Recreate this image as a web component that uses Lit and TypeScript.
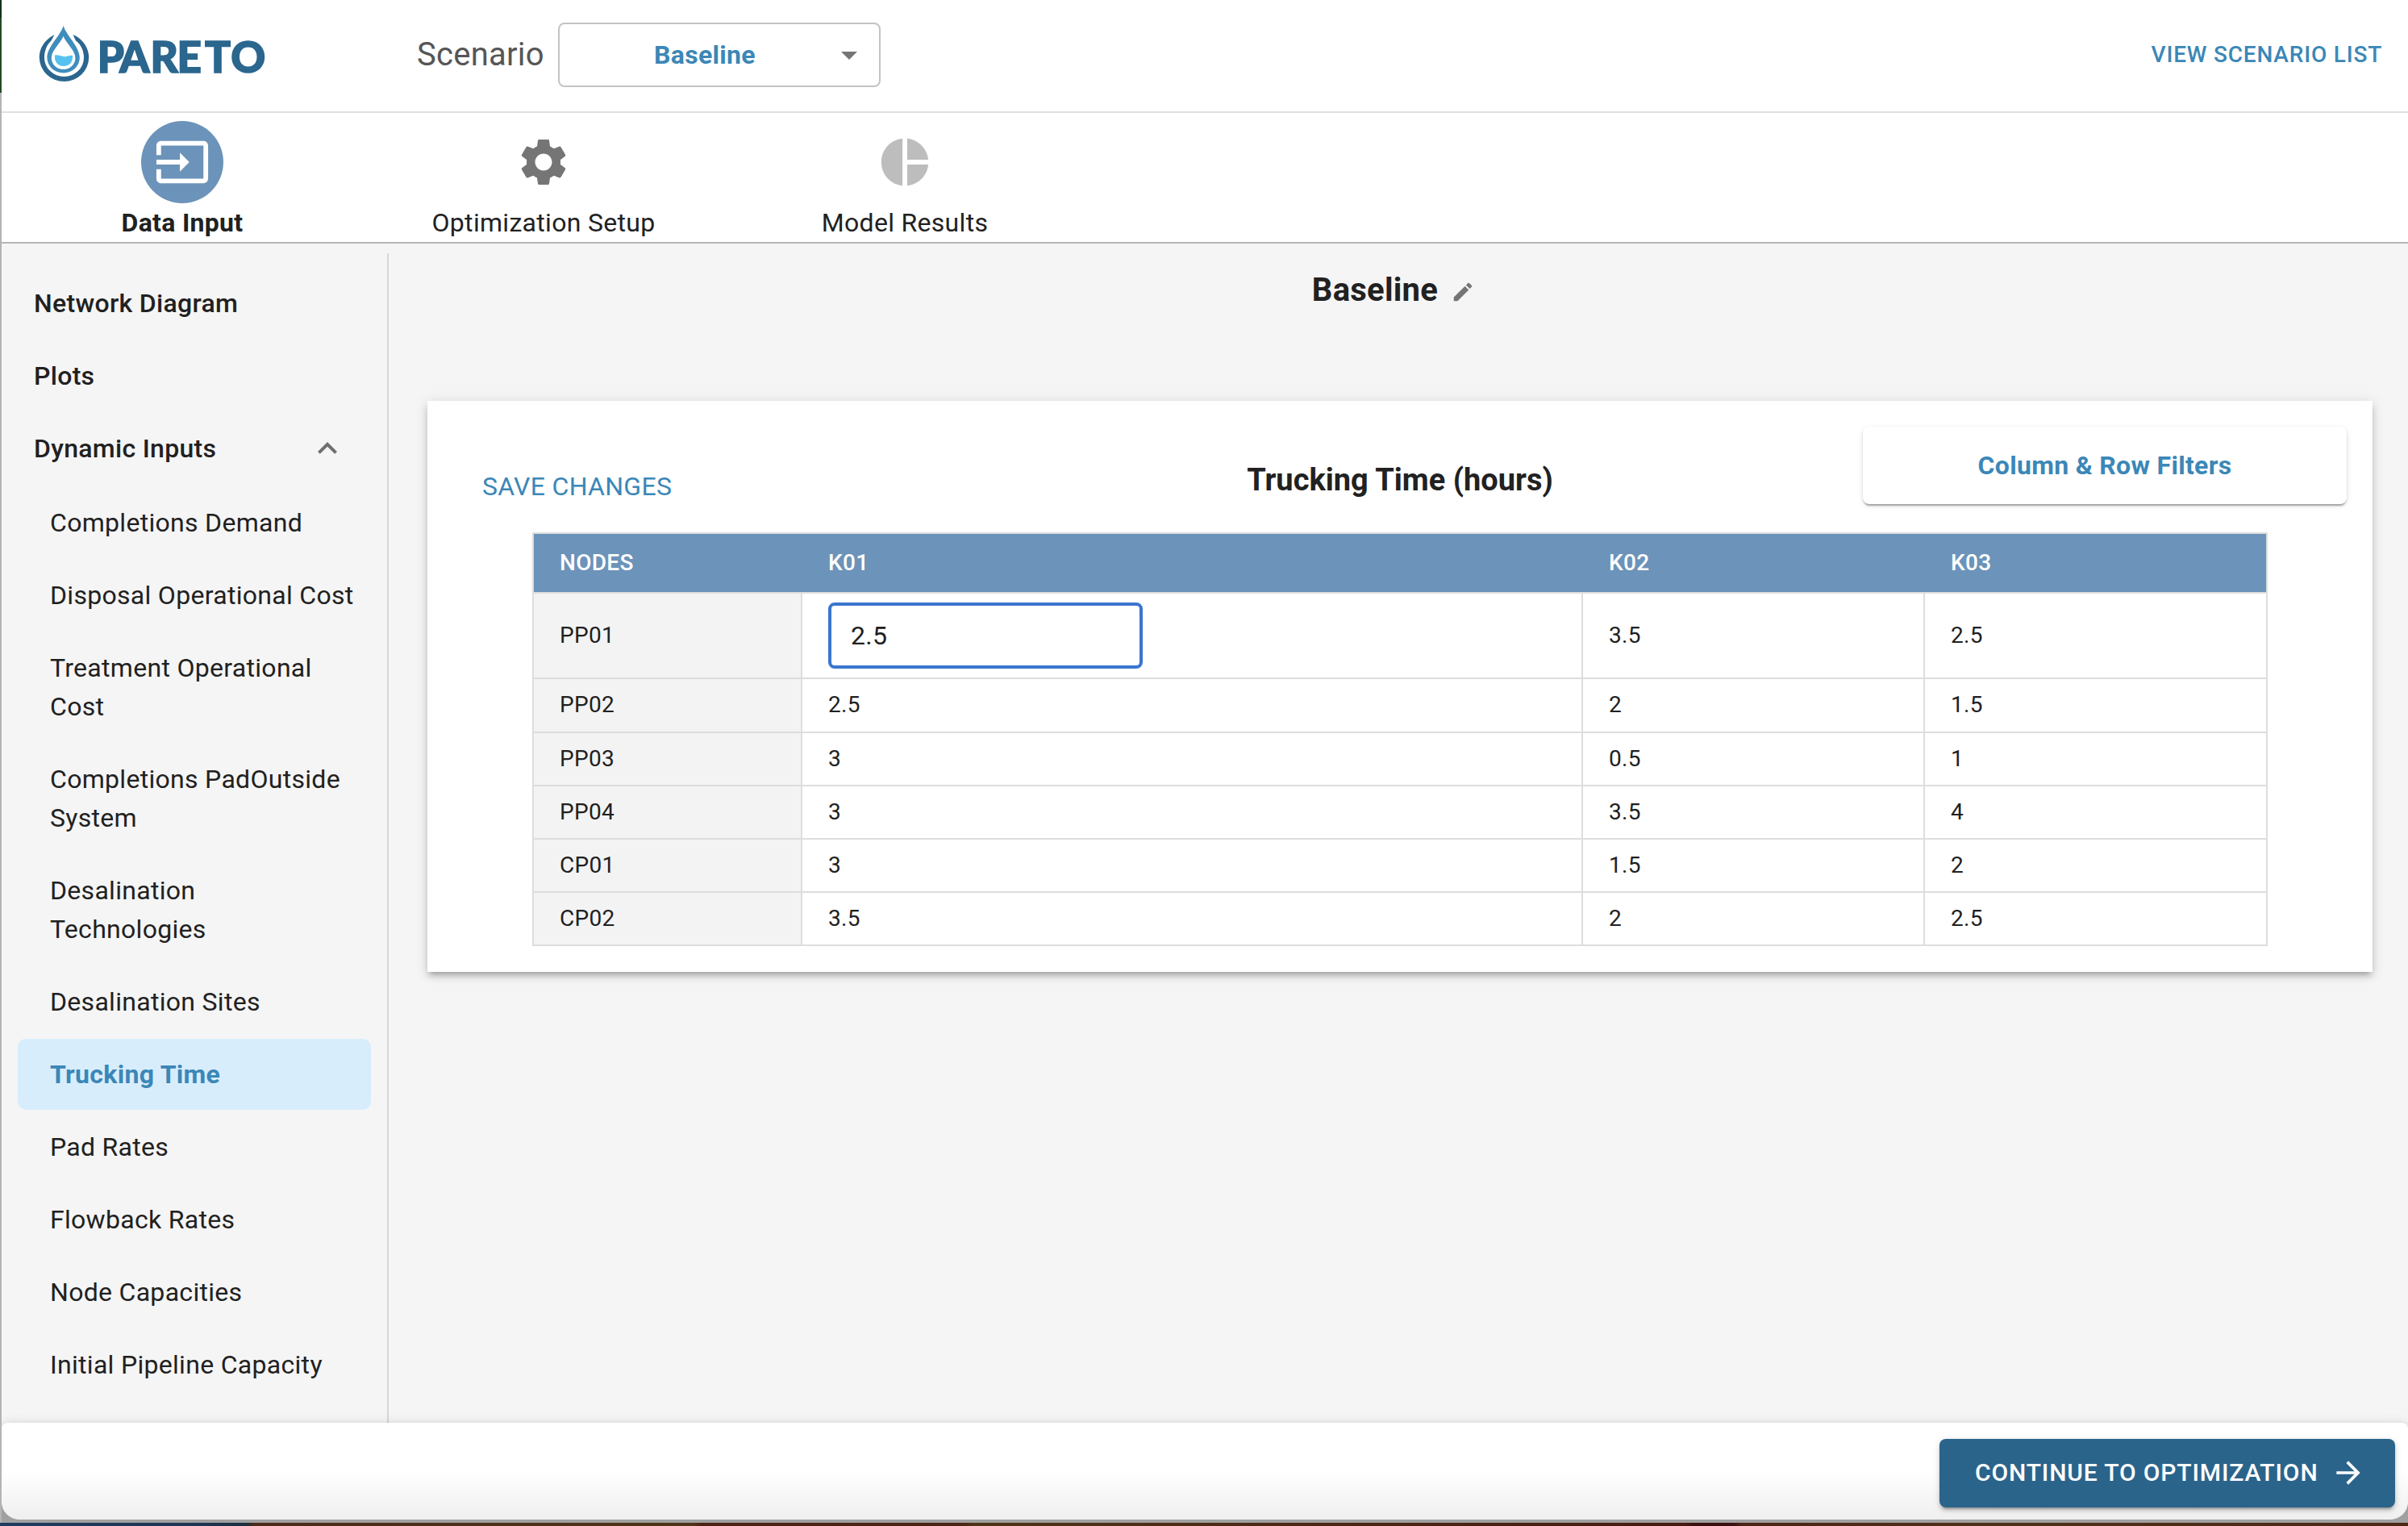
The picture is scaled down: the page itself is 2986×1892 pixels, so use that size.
import { LitElement, html, css, svg } from "lit";
import { customElement, state } from "lit/decorators.js";
import { classMap } from "lit/directives/class-map.js";

const ICONS = {
  input:
    "M21 3.01H3c-1.1 0-2 .9-2 2V9h2V4.99h18v14.03H3V15H1v4.01c0 1.1.9 1.98 2 1.98h18c1.1 0 2-.88 2-1.98v-14c0-1.11-.9-2-2-2zM11 16l4-4-4-4v3H1v2h10v3z",
  settings:
    "M19.14 12.94c.04-.3.06-.61.06-.94 0-.32-.02-.64-.07-.94l2.03-1.58c.18-.14.23-.41.12-.61l-1.92-3.32c-.12-.22-.37-.29-.59-.22l-2.39.96c-.5-.38-1.03-.7-1.62-.94l-.36-2.54c-.04-.24-.24-.41-.48-.41h-3.84c-.24 0-.43.17-.47.41l-.36 2.54c-.59.24-1.13.57-1.62.94l-2.39-.96c-.22-.08-.47 0-.59.22L2.74 8.87c-.12.21-.08.47.12.61l2.03 1.58c-.05.3-.09.63-.09.94s.02.64.07.94l-2.03 1.58c-.18.14-.23.41-.12.61l1.92 3.32c.12.22.37.29.59.22l2.39-.96c.5.38 1.03.7 1.62.94l.36 2.54c.05.24.24.41.48.41h3.84c.24 0 .44-.17.47-.41l.36-2.54c.59-.24 1.13-.56 1.62-.94l2.39.96c.22.08.47 0 .59-.22l1.92-3.32c.12-.22.07-.47-.12-.61l-2.01-1.58zM12 15.6c-1.98 0-3.6-1.62-3.6-3.6s1.62-3.6 3.6-3.6 3.6 1.62 3.6 3.6-1.62 3.6-3.6 3.6z",
  pie: "M11 2v20c-5.07-.5-9-4.79-9-10s3.93-9.5 9-10zm2.03 0v8.99H22c-.47-4.74-4.24-8.52-8.97-8.99zm0 11.01V22c4.74-.47 8.5-4.25 8.97-8.99h-8.97z",
  edit: "M3 17.25V21h3.75L17.81 9.94l-3.75-3.75L3 17.25zM20.71 7.04c.39-.39.39-1.02 0-1.41l-2.34-2.34a.9959.9959 0 0 0-1.41 0l-1.83 1.83 3.75 3.75 1.83-1.83z",
  dropdown: "M7 10l5 5 5-5z",
  less: "m12 8-6 6 1.41 1.41L12 10.83l4.59 4.58L18 14z",
  forward: "m12 4-1.41 1.41L16.17 11H4v2h12.17l-5.58 5.59L12 20l8-8z",
};

const icon = (name: keyof typeof ICONS, cls: string) =>
  html`<svg class="icon ${cls}" viewBox="0 0 24 24" aria-hidden="true">${svg`<path d=${ICONS[name]}></path>`}</svg>`;

const INPUTS = [
  "Completions Demand",
  "Disposal Operational Cost",
  "Treatment Operational\nCost",
  "Completions PadOutside\nSystem",
  "Desalination\nTechnologies",
  "Desalination Sites",
  "Trucking Time",
  "Pad Rates",
  "Flowback Rates",
  "Node Capacities",
  "Initial Pipeline Capacity",
];

const HEAD = ["NODES", "K01", "K02", "K03"];
const ROWS = [
  ["PP01", "2.5", "3.5", "2.5"],
  ["PP02", "2.5", "2", "1.5"],
  ["PP03", "3", "0.5", "1"],
  ["PP04", "3", "3.5", "4"],
  ["CP01", "3", "1.5", "2"],
  ["CP02", "3.5", "2", "2.5"],
];

@customElement("app-root")
export class AppRoot extends LitElement {
  @state() private selected = "Trucking Time";

  static styles = css`
    :host {
      display: block;
      width: 2986px;
      height: 1892px;
      overflow: hidden;
      box-sizing: border-box;
      font-family: Roboto, "Liberation Sans", sans-serif;
      font-size: 32px;
      line-height: 48px;
      letter-spacing: 0.3px;
      color: #212121;
      background: linear-gradient(#14301a 0 22px, #234b25 22px 115px, #b4b4b6 115px 1888px, #2a1c14 1888px);
    }
    * {
      box-sizing: border-box;
    }
    .icon {
      display: block;
      fill: currentColor;
      flex: none;
    }
    .window {
      display: flex;
      flex-direction: column;
      height: 1884px;
      margin-left: 2px;
      background: #f5f5f5;
      border-radius: 0 0 22px 22px;
      overflow: hidden;
    }
    .shell {
      height: 1888px;
      background: linear-gradient(90deg, #0000 0 2px, #a0a0a0 2px) 0 1850px / 100% 38px no-repeat;
    }
    .desk {
      height: 4px;
      background: linear-gradient(
        90deg,
        #1e3b60 0,
        #1e3552 250px,
        #1c2f40 305px,
        #4c2a1a 315px,
        #4f3418 860px,
        #4e2114 870px,
        #4a2414 1190px,
        #4f3318 1210px,
        #4c2815 1600px,
        #481a12 2090px,
        #3a1010 2100px,
        #3a1010 2150px,
        #4c2415 2160px,
        #4f3019 2475px,
        #4c2815 2986px
      );
    }
    .top {
      display: flex;
      align-items: center;
      height: 140px;
      flex: none;
      background: #fff;
      border-bottom: 2px solid #e0e0e0;
    }
    .logo {
      display: block;
      width: 290px;
      height: 80px;
      margin: -2px 0 0 44px;
      flex: none;
    }
    .logo text {
      font-family: Lato, "Open Sans", sans-serif;
      font-weight: 900;
      font-size: 53px;
      letter-spacing: 0;
      fill: #2b668e;
      stroke: #2b668e;
      stroke-width: 1.6px;
    }
    .scenario {
      margin-left: 181px;
      width: 174.5px;
      font-size: 40px;
      letter-spacing: 0.25px;
      color: #565656;
      margin-top: -2px;
    }
    .select {
      display: flex;
      align-items: center;
      width: 400px;
      height: 80px;
      margin-top: -2px;
      border: 2px solid #c4c4c4;
      border-radius: 8px;
      color: #3b87b7;
      font-weight: 700;
      letter-spacing: 0.3px;
    }
    .select-value {
      width: 361px;
      text-align: center;
    }
    .drop {
      width: 48px;
      height: 48px;
      margin-left: -26px;
      color: #757575;
    }
    .view {
      margin: -2px 32px 0 auto;
      font-size: 28px;
      font-weight: 500;
      letter-spacing: 0.8px;
      color: #3b87b7;
    }
    .tabs {
      display: flex;
      height: 162px;
      flex: none;
      background: #fff;
      border-bottom: 2px solid #b6b6b6;
      padding-top: 10px;
    }
    .tab {
      display: flex;
      flex-direction: column;
      align-items: center;
      width: 448px;
      letter-spacing: 0.3px;
    }
    .tab.active {
      font-weight: 700;
    }
    .badge {
      display: grid;
      place-items: center;
      width: 102px;
      height: 102px;
      border-radius: 50%;
      color: #757575;
    }
    .badge.input {
      background: #6c93b9;
      color: #fff;
    }
    .badge.pie {
      color: #bdbdbd;
    }
    .tabicon {
      width: 70px;
      height: 70px;
    }
    .middle {
      display: flex;
      height: 1462px;
      flex: none;
    }
    .side {
      width: 480px;
      margin-top: 12px;
      padding: 18px 20px 0;
      border-right: 2px solid #d8d8d8;
    }
    .group {
      display: flex;
      justify-content: space-between;
      align-items: center;
      height: 88px;
      margin-bottom: 2px;
      padding: 0 30px 0 20px;
      font-weight: 500;
    }
    .group .icon {
      width: 48px;
      height: 48px;
      color: #6f6f6f;
    }
    .subs {
      margin-top: 4px;
    }
    .sub {
      padding: 20px 0 20px 40px;
      margin-bottom: 2px;
      border-radius: 10px;
      white-space: pre;
    }
    .sub.on {
      background: #d8edfc;
      color: #3b87b7;
      font-weight: 700;
    }
    .main {
      flex: 1;
      padding: 0 44px 0 48px;
    }
    .heading {
      display: flex;
      align-items: center;
      justify-content: center;
      gap: 16px;
      height: 195px;
      padding: 0 16px 79px 0;
      font-size: 40px;
      font-weight: 700;
      letter-spacing: 0.25px;
    }
    .pencil {
      width: 30px;
      height: 30px;
      margin-top: 3px;
      color: #757575;
    }
    .card {
      height: 708px;
      background: #fff;
      box-shadow: 0 6px 6px -4px rgba(0, 0, 0, 0.2), 0 6px 8px 0 rgba(0, 0, 0, 0.14),
        0 2px 16px 0 rgba(0, 0, 0, 0.12);
    }
    .bar {
      display: grid;
      grid-template-columns: 600px 1fr 600px;
      height: 163px;
      padding: 32px 32px 0;
    }
    .save {
      padding: 50px 0 0 36px;
      letter-spacing: 0.3px;
      color: #3b87b7;
    }
    .title {
      padding-top: 42px;
      text-align: center;
      font-size: 38px;
      font-weight: 700;
      letter-spacing: 0;
    }
    .filters {
      height: 96px;
      border-radius: 8px;
      line-height: 96px;
      text-align: center;
      font-weight: 700;
      color: #3b87b7;
      box-shadow: 0 4px 2px -2px rgba(0, 0, 0, 0.2), 0 2px 2px 0 rgba(0, 0, 0, 0.14),
        0 2px 6px 0 rgba(0, 0, 0, 0.12);
    }
    .table {
      width: 2152px;
      margin-left: 130px;
      border: 2px solid #ddd;
      border-bottom: 0;
      font-size: 28px;
    }
    .row {
      display: grid;
      grid-template-columns: 333px 968px 424px 1fr;
      height: 66px;
      border-bottom: 2px solid #ddd;
    }
    .row.second {
      height: 67px;
    }
    .row.editing {
      height: 106px;
    }
    .row.head {
      height: 74px;
      background: #6c93b9;
      color: #fff;
      font-weight: 500;
    }
    .cell {
      display: flex;
      align-items: center;
      padding: 0 0 0 32px;
      border-right: 2px solid #ddd;
    }
    .second .cell {
      padding-bottom: 1px;
    }
    .head .cell {
      border-right-color: transparent;
    }
    .cell:first-child {
      background: #f3f3f3;
    }
    .head .cell:first-child {
      background: none;
    }
    .cell:last-child {
      border-right: 0;
    }
    .field {
      width: 390px;
      height: 82px;
      padding-left: 24px;
      border: 4px solid #3a76cd;
      border-radius: 8px;
      font-size: 32px;
      line-height: 74px;
    }
    .foot {
      display: flex;
      justify-content: flex-end;
      height: 120px;
      flex: none;
      padding: 20px 16px 0 0;
      background: linear-gradient(#fff 50%, #efefef);
      border-radius: 8px 8px 22px 22px;
      box-shadow: 0 4px 8px rgba(0, 0, 0, 0.14), 0 2px 16px rgba(0, 0, 0, 0.14);
    }
    .go {
      display: flex;
      align-items: center;
      gap: 15px;
      width: 565px;
      height: 85px;
      padding: 0 0 1px 44px;
      border-radius: 8px;
      background: #2b648b;
      color: #fff;
      font-size: 30px;
      font-weight: 500;
      letter-spacing: 0.86px;
      box-shadow: 0 6px 2px -4px rgba(0, 0, 0, 0.2), 0 4px 4px 0 rgba(0, 0, 0, 0.14),
        0 2px 10px 0 rgba(0, 0, 0, 0.12);
    }
    .arrow {
      width: 44px;
      height: 44px;
    }
  `;

  private logo() {
    return html`<svg class="logo" viewBox="46 28 290 80" role="img" aria-label="PARETO">
      <path
        fill="#2b668e"
        d="M67.5 43C54 50 48.800 61 48.800 71A30.700 30 0 0 0 110.200 71C110.200 61 104 48.500 90.500 43L94 50.500C100.500 55 104 63 104 71.500A24.500 23.500 0 0 1 55 71.500C55 63 58 55.500 63.500 50.500Z"
      ></path>
      <path
        fill="#3f8dbd"
        fill-rule="evenodd"
        d="M78.600 32C83 45 98.800 58 98.800 71.500A20.200 19 0 0 1 58.400 71.500C58.400 58 74.500 45 78.600 32ZM78.600 45C75 54 63.800 62 63.800 72A14.800 14 0 0 0 93.400 72C93.400 62 82 54 78.600 45Z"
      ></path>
      <path
        fill="#56c2f0"
        d="M68 68.500C74 67.500 77 71 82 70C85.500 69.500 87.500 68.500 90 69C90.500 77 86 82 79 82C71.500 82 67 76 68 68.500Z"
      ></path>
      <text y="89.700" x="120.800 148.200 186.500 219.500 254 286.200">PARETO</text>
    </svg>`;
  }

  render() {
    return html`
      <div class="shell">
        <div class="window">
          <header class="top">
            ${this.logo()}
            <div class="scenario">Scenario</div>
            <div class="select"><span class="select-value">Baseline</span>${icon("dropdown", "drop")}</div>
            <div class="view">VIEW SCENARIO LIST</div>
          </header>
          <nav class="tabs">
            <div class="tab active"><div class="badge input">${icon("input", "tabicon")}</div>Data Input</div>
            <div class="tab"><div class="badge">${icon("settings", "tabicon")}</div>Optimization Setup</div>
            <div class="tab"><div class="badge pie">${icon("pie", "tabicon")}</div>Model Results</div>
          </nav>
          <div class="middle">
            <aside class="side">
              <div class="group">Network Diagram</div>
              <div class="group">Plots</div>
              <div class="group">Dynamic Inputs ${icon("less", "")}</div>
              <div class="subs">
                ${INPUTS.map(
                  (t) =>
                    html`<div
                      class=${classMap({ sub: true, on: t === this.selected })}
                      @click=${() => (this.selected = t)}
                      >${t}</div
                    >`
                )}
              </div>
            </aside>
            <main class="main">
              <div class="heading">Baseline ${icon("edit", "pencil")}</div>
              <section class="card">
                <div class="bar">
                  <div class="save">SAVE CHANGES</div>
                  <div class="title">Trucking Time (hours)</div>
                  <div class="filters">Column &amp; Row Filters</div>
                </div>
                <div class="table">
                  <div class="row head">${HEAD.map((h) => html`<div class="cell">${h}</div>`)}</div>
                  ${ROWS.map(
                    (r, i) => html`<div class=${classMap({ row: true, editing: i === 0, second: i === 1 })}>
                      ${r.map(
                        (c, j) =>
                          html`<div class="cell">${i === 0 && j === 1 ? html`<div class="field">${c}</div>` : c}</div>`
                      )}
                    </div>`
                  )}
                </div>
              </section>
            </main>
          </div>
          <footer class="foot">
            <div class="go">CONTINUE TO OPTIMIZATION ${icon("forward", "arrow")}</div>
          </footer>
        </div>
      </div>
      <div class="desk"></div>
    `;
  }
}
